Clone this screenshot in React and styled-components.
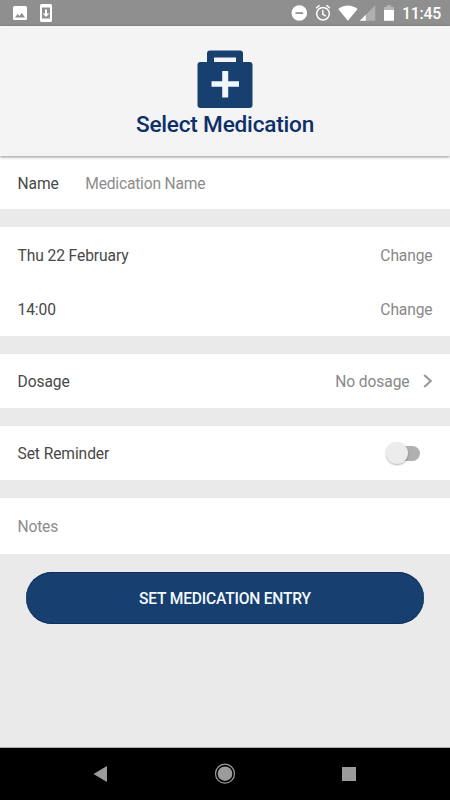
import { useState } from "react";
import styled, { createGlobalStyle } from "styled-components";

const GlobalStyle = createGlobalStyle`
    * {
        box-sizing: border-box;
    }
    body {
        margin: 0;
        font-family: Roboto, "Liberation Sans", sans-serif;
    }
    button, input, textarea {
        font-family: inherit;
    }
`;
const Screen = styled.div`
    display: flex;
    flex-direction: column;
    width: 450px;
    height: 800px;
    background-color: #eaeaea;
    overflow: hidden;
`;
const StatusBar = styled.div`
    display: flex;
    flex-shrink: 0;
    height: 26px;
    align-items: center;
    background-color: #8f8f8f;
    justify-content: space-between;
    padding: 0 9px 0 13px;
`;
const StatusGroup = styled.div`
    display: flex;
    height: 26px;
`;
const StatusIcon = styled.svg`
    display: block;
    height: 26px;
    fill: #fff;
`;
const Clock = styled.span`
    width: 39px;
    margin-left: 8px;
    font-size: 15.8px;
    font-weight: 500;
    letter-spacing: -0.2px;
    line-height: 28px;
    color: #fff;
    white-space: nowrap;
`;
const Header = styled.header`
    display: flex;
    flex-direction: column;
    flex-shrink: 0;
    height: 130px;
    padding-top: 24px;
    align-items: center;
    background-color: #f4f4f4;
    box-shadow: 0 1px 3px rgba(0, 0, 0, 0.45);
    z-index: 1;
`;
const Title = styled.h1`
    margin: 3px 0 0;
    font-size: 22.6px;
    font-weight: 500;
    letter-spacing: -0.2px;
    line-height: 28px;
    color: #0d3068;
    white-space: nowrap;
`;
const Form = styled.main`
    display: flex;
    flex: 1;
    flex-direction: column;
    gap: 18px;
`;
const Section = styled.section`
    display: flex;
    flex-direction: column;
    background-color: #fff;
`;
const Row = styled.div`
    display: flex;
    height: ${({ $height }) => $height || 54}px;
    padding: 0 17.5px;
    align-items: center;
    justify-content: ${({ $start }) => $start ? 'flex-start' : 'space-between'};
`;
const Label = styled.span`
    padding-top: 2px;
    font-size: 15.6px;
    letter-spacing: -0.09px;
    line-height: 20px;
    color: #484848;
`;
const Value = styled(Label)`
    display: flex;
    align-items: center;
    color: #888;
`;
const Field = styled.input`
    width: 300px;
    margin-left: ${({ $indent }) => $indent || 0}px;
    padding: 2px 0 0;
    border: 0;
    outline: 0;
    font-size: 15.6px;
    letter-spacing: -0.19px;
    line-height: 20px;
    color: #484848;
    &::placeholder {
        color: #8c8c8c;
        opacity: 1;
    }
`;
const LinkButton = styled.button`
    padding: 2px 0 0;
    border: 0;
    background: none;
    font-size: 15.6px;
    letter-spacing: -0.12px;
    line-height: 20px;
    color: #888;
`;
const Chevron = styled.svg`
    width: 10px;
    height: 14px;
    margin: -3px 0 0 13px;
    fill: none;
    stroke: #999;
    stroke-width: 2.2;
`;
const Toggle = styled.button`
    display: flex;
    width: 33px;
    height: 15px;
    margin-right: 12.5px;
    padding: 0;
    align-items: center;
    justify-content: ${({ $on }) => $on ? 'flex-end' : 'flex-start'};
    border: 0;
    border-radius: 8px;
    background-color: #b0b0b0;
`;
const Thumb = styled.span`
    width: 22px;
    height: 22px;
    margin-left: -1.5px;
    border-radius: 50%;
    background-color: #ececec;
    box-shadow: 0 1px 2px rgba(0, 0, 0, 0.3);
`;
const Submit = styled.button`
    height: 52px;
    margin: 0 26px;
    padding: 2px 0 0;
    border: 0;
    border-radius: 26px;
    background-color: #173f70;
    box-shadow: inset 0 1px #0c2e61, inset 0 -1px #0c2e61;
    font-size: 15.6px;
    font-weight: 500;
    letter-spacing: -0.2px;
    color: #f4f9ff;
`;
const NavBar = styled.nav`
    display: flex;
    flex-shrink: 0;
    height: 53px;
    padding: 0 93px;
    align-items: center;
    justify-content: space-between;
    border-top: 1px solid #aaa;
    background-color: #000;
`;
const NavIcon = styled.svg`
    display: block;
    width: 22px;
    height: 22px;
    fill: #9b9b9b;
`;
const BagIcon = styled.svg`
    display: block;
    flex-shrink: 0;
    width: 56px;
    height: 58px;
`;

const Status = () => <StatusBar>
    <StatusGroup>
        <StatusIcon width="42" viewBox="0 0 42 26">
            <path fillRule="evenodd" d="M1.500 6h11A1.500 1.500 0 0 1 14 7.500v11a1.500 1.500 0 0 1-1.500 1.500h-11A1.500 1.500 0 0 1 0 18.500v-11A1.500 1.500 0 0 1 1.500 6ZM2 17.500h10L8.800 13l-2.500 3-1.700-2Z" />
            <path fillRule="evenodd" d="M28.500 4h9A1.500 1.500 0 0 1 39 5.500v15a1.500 1.500 0 0 1-1.500 1.500h-9A1.500 1.500 0 0 1 27 20.500v-15A1.500 1.500 0 0 1 28.500 4ZM29 7.500v11h8v-11Z" />
            <path d="M32 9.500h2v4h2.400L33 17l-3.400-3.500H32Z" />
        </StatusIcon>
    </StatusGroup>
    <StatusGroup>
        <StatusIcon width="104" viewBox="0 0 104 26">
            <path fillRule="evenodd" d="M9.300 5.200a7.800 7.800 0 1 0 0 15.600a7.800 7.800 0 0 0 0-15.600ZM5.500 12.200h7.600v1.700H5.500Z" />
            <g fill="none" stroke="#fff" strokeWidth="1.500">
                <circle cx="33" cy="13.700" r="6.300" />
                <path d="M32.800 10v4.300l3 1.800M26.100 8.300l3.500-3M39.900 8.300l-3.500-3" />
            </g>
            <path d="M48.200 9C53.900 4.300 61.900 4.300 67.600 9L57.900 20.800Z" />
            <path opacity=".3" d="M85.300 5.300v15.500H69.800Z" />
            <path d="M75.800 14.800v6h-6Z" />
            <path opacity=".35" d="M94 7h2.800V5.300h4.200V7h3v3.500H94Z" />
            <path d="M94 10h10v10.800H94Z" />
        </StatusIcon>
        <Clock>11:45</Clock>
    </StatusGroup>
</StatusBar>

const MedicalBag = () => <BagIcon viewBox="0 0 56 58">
    <path fill="#173f70" fillRule="evenodd" d="M13 .5h30a3 3 0 0 1 3 3V12h6.500a3 3 0 0 1 3 3v40a3 3 0 0 1-3 3h-49a3 3 0 0 1-3-3V15a3 3 0 0 1 3-3H10V3.500a3 3 0 0 1 3-3ZM17 7.500V12h22V7.500Z" />
    <path fill="#f0f6fd" d="M25.200 21h6v10.200h10.800v5.600H31.200v10.700h-6V36.800H14.500v-5.600h10.700Z" />
</BagIcon>

export default () => {
    const [reminder, setReminder] = useState(false);

    return <>
        <GlobalStyle />
        <Screen>
            <Status />
            <Header>
                <MedicalBag />
                <Title>Select Medication</Title>
            </Header>
            <Form>
                <Section>
                    <Row $start $height={53}>
                        <Label>Name</Label>
                        <Field $indent={26.5} placeholder="Medication Name" />
                    </Row>
                </Section>
                <Section>
                    <Row $height={55}>
                        <Label>Thu 22 February</Label>
                        <LinkButton>Change</LinkButton>
                    </Row>
                    <Row>
                        <Label>14:00</Label>
                        <LinkButton>Change</LinkButton>
                    </Row>
                </Section>
                <Section>
                    <Row>
                        <Label>Dosage</Label>
                        <Value>
                            No dosage
                            <Chevron viewBox="0 0 10 14"><path d="M1.200 1l6.500 6-6.500 6" /></Chevron>
                        </Value>
                    </Row>
                </Section>
                <Section>
                    <Row>
                        <Label>Set Reminder</Label>
                        <Toggle $on={reminder} onClick={() => setReminder(!reminder)}><Thumb /></Toggle>
                    </Row>
                </Section>
                <Section>
                    <Row $height={56}>
                        <Field placeholder="Notes" />
                    </Row>
                </Section>
                <Submit>SET MEDICATION ENTRY</Submit>
            </Form>
            <NavBar>
                <NavIcon viewBox="0 0 22 22"><path d="M.5 11 13 3.500q1-.5 1 .5v14q0 1-1 .5Z" /></NavIcon>
                <NavIcon viewBox="0 0 22 22">
                    <circle cx="11" cy="10.700" r="7.300" />
                    <circle cx="11" cy="10.700" r="9.500" fill="none" stroke="#9b9b9b" strokeWidth="1.200" />
                </NavIcon>
                <NavIcon viewBox="0 0 22 22"><path d="M7 4h14v14H7Z" /></NavIcon>
            </NavBar>
        </Screen>
    </>
}
